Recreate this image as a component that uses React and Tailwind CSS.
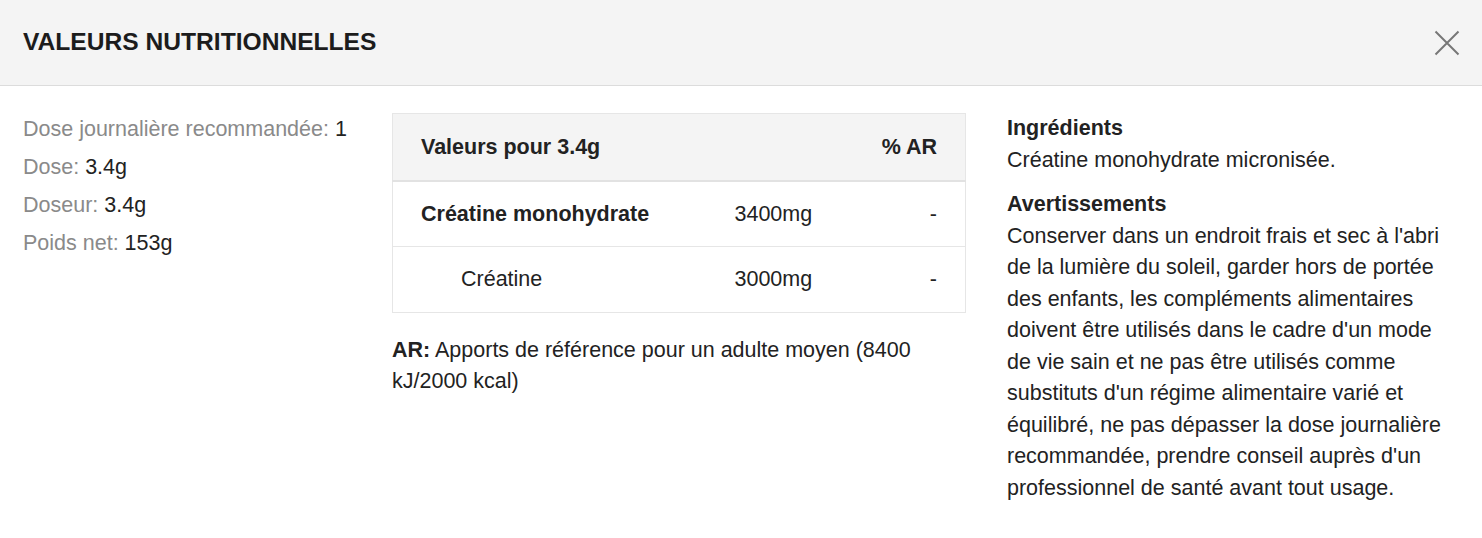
export default function App() {
  const specs = [
    ['Dose journalière recommandée:', '1'],
    ['Dose:', '3.4g'],
    ['Doseur:', '3.4g'],
    ['Poids net:', '153g'],
  ]

  return (
    <div className="min-h-[538px] bg-white text-[#222] font-['Liberation_Sans',Arial,sans-serif]">
      <header className="flex h-[86px] items-center justify-between border-b border-[#dcdcdc] bg-[#f4f4f4] pl-[23px] pr-[22px]">
        <h1 className="text-[24.6px] font-bold text-[#1c1c1c]">
          VALEURS NUTRITIONNELLES
        </h1>
        <button className="text-[#777]" aria-label="Fermer">
          <svg width="26" height="26" viewBox="0 0 26 26" fill="none" stroke="currentColor" strokeWidth="2">
            <path d="M1.5 1.5l23 23M24.5 1.5l-23 23" />
          </svg>
        </button>
      </header>

      <div className="grid grid-cols-[369px_574px_1fr] px-[23px] pt-[27px] text-[21.5px]">
        <div className="-mt-[3px] leading-[38px]">
          {specs.map(([label, value]) => (
            <p key={label}>
              <span className="text-[#8a8a8a]">{label}</span> {value}
            </p>
          ))}
        </div>

        <div>
          <table className="w-full border-collapse border border-[#e6e6e6] text-left">
            <thead>
              <tr className="h-[67px] border-b-2 border-[#e2e2e2] bg-[#f4f4f4]">
                <th className="pl-[28px] font-bold" colSpan={2}>Valeurs pour 3.4g</th>
                <th className="pr-[28px] text-right font-bold">% AR</th>
              </tr>
            </thead>
            <tbody>
              <tr className="h-[66px] border-b border-[#e6e6e6]">
                <td className="w-[314px] pl-[28px] font-bold">Créatine monohydrate</td>
                <td className="pl-[28px]">3400mg</td>
                <td className="pr-[28px] text-right">-</td>
              </tr>
              <tr className="h-[66px]">
                <td className="pl-[68px]">Créatine</td>
                <td className="pl-[28px]">3000mg</td>
                <td className="pr-[28px] text-right">-</td>
              </tr>
            </tbody>
          </table>
          <p className="mt-[22px] leading-[31px]">
            <span className="font-bold">AR:</span> Apports de référence pour un adulte moyen (8400 kJ/2000 kcal)
          </p>
        </div>

        <div className="pl-[41px] leading-[31.5px]">
          <h2 className="font-bold">Ingrédients</h2>
          <p>Créatine monohydrate micronisée.</p>
          <h2 className="mt-[13px] font-bold">Avertissements</h2>
          <p>
            Conserver dans un endroit frais et sec à l'abri de la lumière du soleil, garder hors de portée
            des enfants, les compléments alimentaires doivent être utilisés dans le cadre d'un mode de vie
            sain et ne pas être utilisés comme substituts d'un régime alimentaire varié et équilibré, ne pas
            dépasser la dose journalière recommandée, prendre conseil auprès d'un professionnel de santé
            avant tout usage.
          </p>
        </div>
      </div>
    </div>
  )
}
